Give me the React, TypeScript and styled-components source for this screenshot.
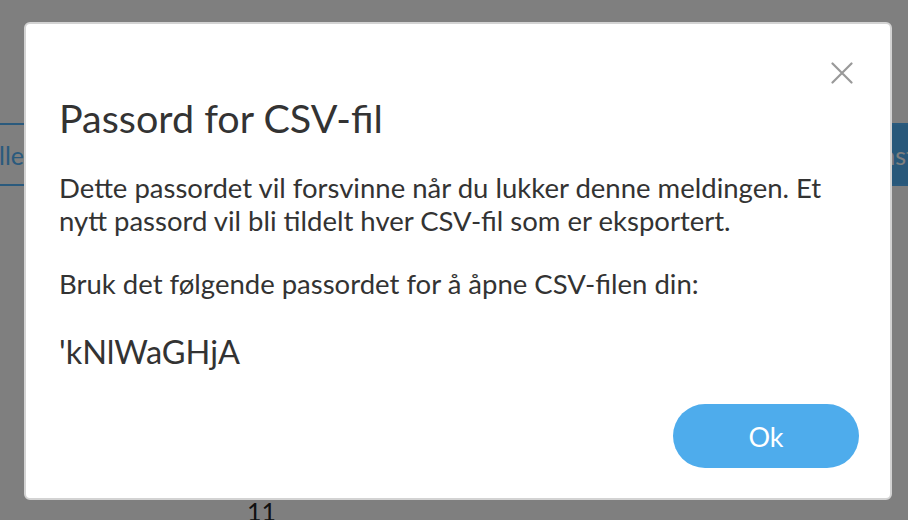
import React from "react";
import styled, { createGlobalStyle } from "styled-components";

const Global = createGlobalStyle`
  html, body { margin: 0; padding: 0; }
  body {
    width: 908px;
    height: 520px;
    overflow: hidden;
    background: #ffffff;
    font-family: Lato, "Open Sans", Arial, sans-serif;
  }
`;

const Page = styled.div`
  width: 908px;
  height: 520px;
  overflow: hidden;
  display: flex;
  flex-direction: column;
`;

const Toolbar = styled.div`
  display: flex;
  justify-content: space-between;
  align-items: stretch;
  margin-top: 123px;
  height: 63px;
`;

const PageButton = styled.div<{ $filled?: boolean }>`
  display: flex;
  align-items: center;
  box-sizing: border-box;
  height: 63px;
  font-size: 25px;
  border: 2px solid #55b4fa;
  ${(p) => (p.$filled ? "background: #50b0f4; color: #ffffff;" : "background: #fff; color: #55b4fa;")}
`;

const LeftButton = styled(PageButton)`
  width: 140px;
  margin-left: -100px;
  justify-content: flex-end;
  padding-right: 14px;
`;

const RightButton = styled(PageButton)`
  width: 140px;
  margin-right: -97px;
  padding-left: 3px;
`;

const Divider = styled.div<{ $top: number }>`
  height: 2px;
  background: #d6d6d6;
  margin-top: ${(p) => p.$top}px;
`;

const PageNumber = styled.div`
  margin: 40px 0 0 247px;
  font-size: 25px;
  color: #222;
`;

const Overlay = styled.div`
  position: fixed;
  inset: 0;
  background: rgba(0, 0, 0, 0.5);
  display: flex;
  align-items: flex-start;
  padding: 22px 0 0 24px;
`;

const Modal = styled.div`
  box-sizing: border-box;
  width: 868px;
  height: 478px;
  background: #ffffff;
  border: 2px solid #d3d3d3;
  border-radius: 6px;
  padding: 0 31px 30px 33px;
  display: flex;
  flex-direction: column;
`;

const Header = styled.div`
  display: flex;
  justify-content: flex-end;
  padding-top: 38px;
  margin-right: 6px;
  height: 22px;
`;

const CloseButton = styled.button`
  width: 22px;
  height: 22px;
  padding: 0;
  border: none;
  background: none;
  cursor: pointer;
  display: flex;
`;

const Title = styled.h2`
  margin: 12px 0 0;
  font-size: 39.5px;
  line-height: 43px;
  font-weight: 400;
  color: #333333;
`;

const Text = styled.p<{ $gap: number }>`
  margin: ${(p) => p.$gap}px 0 0;
  font-size: 27.5px;
  line-height: 33px;
  color: #333333;
`;

const Password = styled.p`
  margin: 32px 0 0;
  font-size: 32.5px;
  line-height: 39px;
  color: #333333;
`;

const Footer = styled.div`
  margin-top: auto;
  display: flex;
  justify-content: flex-end;
`;

const OkButton = styled.button`
  width: 186px;
  height: 64px;
  border: none;
  border-radius: 32px;
  background: #4eacec;
  color: #ffffff;
  font-family: Lato, "Open Sans", Arial, sans-serif;
  font-size: 27px;
  cursor: pointer;
`;

export default function App() {
  return (
    <>
      <Global />
      <Page>
        <Toolbar>
          <LeftButton>Velg alle</LeftButton>
          <RightButton $filled>Last ned</RightButton>
        </Toolbar>
        <Divider $top={71} />
        <Divider $top={199} />
        <PageNumber>11</PageNumber>
      </Page>
      <Overlay>
        <Modal role="dialog">
          <Header>
            <CloseButton aria-label="Lukk">
              <svg width="22" height="22" viewBox="0 0 22 22">
                <path d="M1.5 1.5 L20.5 20.5 M20.5 1.5 L1.5 20.5" stroke="#999999" strokeWidth="2.2" strokeLinecap="round" />
              </svg>
            </CloseButton>
          </Header>
          <Title>Passord for CSV-fil</Title>
          <Text $gap={32}>
            Dette passordet vil forsvinne når du lukker denne meldingen. Et nytt passord vil bli tildelt hver CSV-fil som er eksportert.
          </Text>
          <Text $gap={30}>Bruk det følgende passordet for å åpne CSV-filen din:</Text>
          <Password>'kNlWaGHjA</Password>
          <Footer>
            <OkButton>Ok</OkButton>
          </Footer>
        </Modal>
      </Overlay>
    </>
  );
}
